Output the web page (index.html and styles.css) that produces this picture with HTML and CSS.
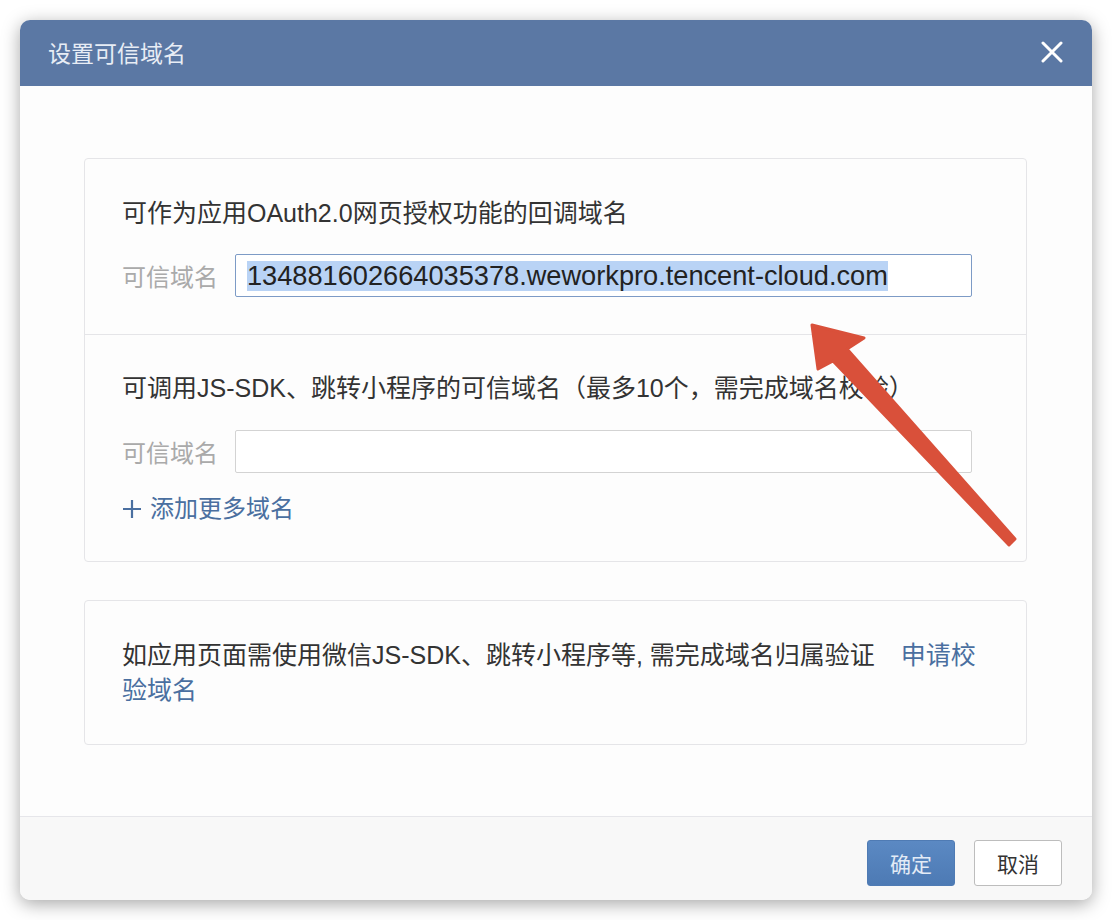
FILE: index.html
```html
<!DOCTYPE html>
<html lang="zh-CN">
<head>
  <meta charset="UTF-8">
  <title>设置可信域名</title>
  <link rel="stylesheet" href="styles.css">
</head>
<body>
  <div class="dialog">
    <div class="dialog-header">
      <span class="dialog-title">设置可信域名</span>
      <button class="close-btn" aria-label="关闭">
        <svg width="22" height="22" viewBox="0 0 22 22"><path d="M2 2 L20 20 M20 2 L2 20" stroke="#fff" stroke-width="3" stroke-linecap="round"/></svg>
      </button>
    </div>

    <div class="dialog-body">
      <div class="card">
        <div class="section">
          <div class="section-title">可作为应用OAuth2.0网页授权功能的回调域名</div>
          <div class="field">
            <label class="field-label">可信域名</label>
            <div class="field-input focused"><span class="selected">134881602664035378.weworkpro.tencent-cloud.com</span></div>
          </div>
        </div>
        <div class="section">
          <div class="section-title">可调用JS-SDK、跳转小程序的可信域名（最多10个，需完成域名校验）</div>
          <div class="field">
            <label class="field-label">可信域名</label>
            <div class="field-input"></div>
          </div>
          <a class="add-link" href="#">
            <svg class="plus" width="20" height="20" viewBox="0 0 20 20"><path d="M10 1 V19 M1 10 H19" stroke="#4a6fa0" stroke-width="2.2"/></svg>
            添加更多域名
          </a>
        </div>
      </div>

      <div class="card note">
        <p>如应用页面需使用微信JS-SDK、跳转小程序等, 需完成域名归属验证<a class="apply-link" href="#">申请校验域名</a></p>
      </div>
    </div>

    <div class="dialog-footer">
      <button class="btn btn-primary">确定</button>
      <button class="btn">取消</button>
    </div>
  </div>

  <!-- annotation arrow drawn over the screenshot -->
  <svg class="arrow" width="1112" height="920" viewBox="0 0 1112 920">
    <polygon points="812,325 864,338 847,349 1015,539 1009,545 833,361 818,369" fill="#d9503a" stroke="#d9503a" stroke-width="3" stroke-linejoin="round"/>
  </svg>
</body>
</html>
```

FILE: styles.css
```css
* {
  box-sizing: border-box;
}
html, body {
  margin: 0;
  background: #fff;
}
body {
  font-family: "Liberation Sans", "Noto Sans CJK SC", sans-serif;
  color: #333;
  position: relative;
  width: 1112px;
  height: 920px;
  overflow: hidden;
}
.dialog {
  margin: 20px;
  width: 1072px;
  height: 880px;
  border-radius: 10px;
  background: #fdfdfd;
  box-shadow: 0 4px 18px rgba(0, 0, 0, 0.35);
  display: flex;
  flex-direction: column;
  overflow: hidden;
}
.dialog-header {
  height: 66px;
  flex: none;
  background: #5b78a4;
  display: flex;
  align-items: center;
  justify-content: space-between;
  padding: 0 29px 0 28px;
}
.dialog-title {
  font-size: 23px;
  color: #e8edf5;
  margin-top: -3px;
}
.close-btn {
  background: none;
  border: none;
  padding: 0;
  width: 22px;
  height: 22px;
  cursor: pointer;
  margin-top: -3px;
}
.close-btn svg {
  display: block;
}
.dialog-body {
  flex: 1;
  padding: 72px 65px 0 64px;
  display: flex;
  flex-direction: column;
  gap: 38px;
}
.card {
  border: 1px solid #e5e5e8;
  border-radius: 4px;
  background: #fdfdfd;
}
.section {
  padding: 36px 54px 37px 37px;
}
.section + .section {
  border-top: 1px solid #e5e5e8;
  padding-top: 35px;
  padding-bottom: 34px;
}
.section-title {
  font-size: 25px;
  line-height: 36px;
  margin-bottom: 23px;
  white-space: nowrap;
}
.section + .section .section-title {
  margin-bottom: 24px;
}
.field {
  display: flex;
  align-items: center;
  gap: 17px;
}
.field-label {
  font-size: 24px;
  color: #aaa;
  width: 96px;
  flex: none;
}
.field-input {
  flex: 1;
  height: 43px;
  border: 1px solid #d3d3d3;
  border-radius: 2px;
  background: #fff;
  display: flex;
  align-items: center;
  padding: 0 11px;
  font-size: 27.2px;
  color: #222;
  white-space: nowrap;
  overflow: hidden;
}
.field-input.focused {
  border-color: #7d9bc6;
}
.selected {
  background: #b9d3f5;
  line-height: 30px;
}
.add-link {
  display: flex;
  align-items: center;
  gap: 8px;
  margin-top: 18px;
  font-size: 24px;
  line-height: 36px;
  color: #4a6fa0;
  text-decoration: none;
}
.plus {
  display: block;
}
.note {
  padding: 37px 50px 36px 37px;
}
.note p {
  margin: 0;
  font-size: 25px;
  line-height: 35px;
}
.apply-link {
  color: #4a6fa0;
  text-decoration: none;
  margin-left: 26px;
}
.dialog-footer {
  height: 84px;
  flex: none;
  border-top: 1px solid #e6e6ea;
  background: #f8f8f8;
  display: flex;
  justify-content: flex-end;
  align-items: flex-start;
  gap: 19px;
  padding: 23px 30px 0 0;
}
.btn {
  width: 88px;
  height: 46px;
  border: 1px solid #bdbdbd;
  border-radius: 3px;
  background: #fff;
  font-family: inherit;
  font-size: 21px;
  color: #333;
  cursor: pointer;
}
.btn-primary {
  background: linear-gradient(#5b89c3, #4d7ab4);
  border-color: #4f7bb4;
  color: #e3ebf6;
}
.arrow {
  position: absolute;
  top: 0;
  left: 0;
  pointer-events: none;
}
```
